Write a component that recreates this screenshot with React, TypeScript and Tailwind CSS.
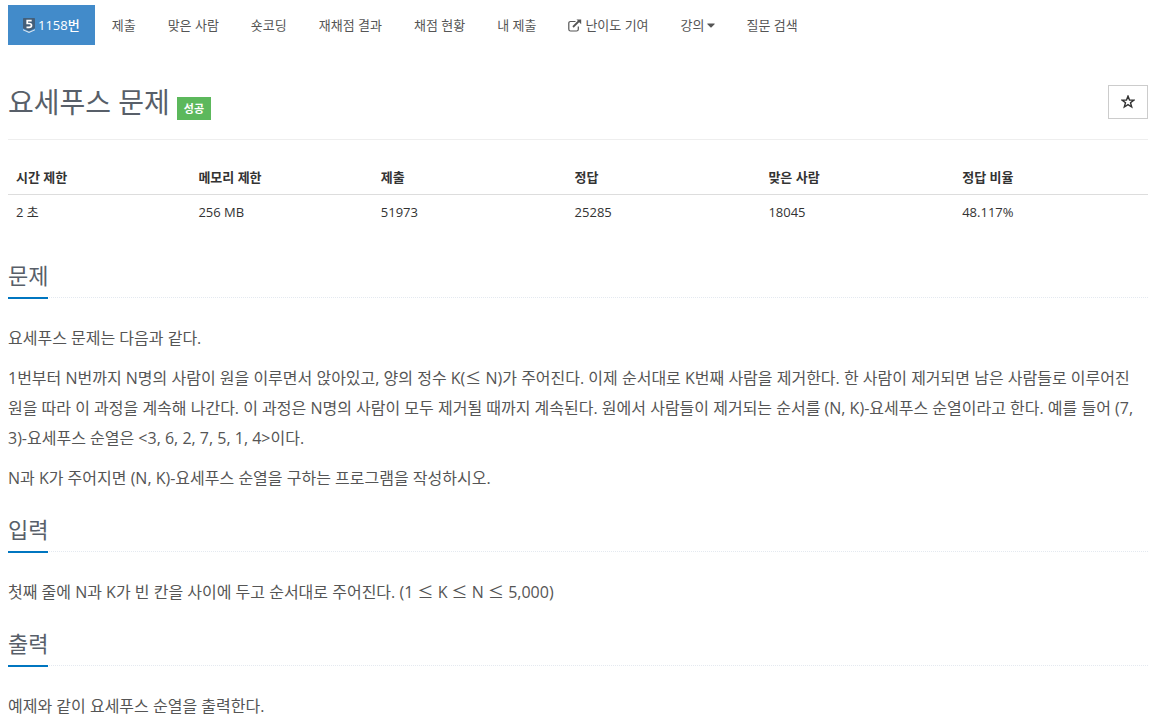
import type { ReactNode } from "react";
import { FaCaretDown } from "react-icons/fa";

interface NavItem {
  label: string;
  icon?: "external";
  dropdown?: boolean;
}

const navItems: NavItem[] = [
  { label: "제출" },
  { label: "맞은 사람" },
  { label: "숏코딩" },
  { label: "재채점 결과" },
  { label: "채점 현황" },
  { label: "내 제출" },
  { label: "난이도 기여", icon: "external" },
  { label: "강의", dropdown: true },
  { label: "질문 검색" },
];

const stats = [
  { label: "시간 제한", value: "2 초", width: "w-[16%]" },
  { label: "메모리 제한", value: "256 MB", width: "w-[16%]" },
  { label: "제출", value: "51973", width: "w-[17%]" },
  { label: "정답", value: "25285", width: "w-[17%]" },
  { label: "맞은 사람", value: "18045", width: "w-[17%]" },
  { label: "정답 비율", value: "48.117%", width: "w-[17%]" },
];

const TierBadge = () => (
  <svg viewBox="0 0 12 15" className="h-[15px] w-3 shrink-0" aria-hidden="true">
    <path d="M0 .8Q0 0 .8 0h10.4Q12 0 12 .8V10.2L6 13 0 10.2Z" fill="#435f7a" />
    <path d="M0 11.2l6 2.6 6-2.6v1.1L6 15 0 12.3Z" fill="#dbe6f0" />
    <path d="M8.7 2.7H4.2V5.5h1.9q2.4 0 2.4 1.9T6 9.3H3.5" fill="none" stroke="#fff" strokeWidth="1.7" />
  </svg>
);

const ExternalIcon = () => (
  <svg viewBox="0 0 14 13" className="h-[13px] w-3.5 shrink-0" fill="none" stroke="currentColor" aria-hidden="true">
    <path d="M7.5 2.5H2.6Q.8 2.5.8 4.3v5.9Q.8 12 2.6 12h5.9q1.8 0 1.8-1.8V7.6" strokeWidth="1.2" />
    <path d="M5 8l6-6" strokeWidth="1.8" />
    <path d="M8.5.5h4.7v4.7Z" fill="currentColor" stroke="none" />
  </svg>
);

const StarIcon = () => (
  <svg viewBox="0 0 14 14" className="h-3.5 w-3.5" fill="none" stroke="currentColor" strokeWidth="1.4" aria-hidden="true">
    <path d="M7 1.1l1.5 3.9 4.4.1-3.4 2.6 1.2 4.3L7 9.6 3.3 12l1.2-4.3-3.4-2.6L5.5 5Z" />
  </svg>
);

// The full-width sign, taken from the Korean font
const Le = () => <span className="font-['Noto_Sans_CJK_KR',sans-serif] leading-none">≤</span>;

const Section = ({ title, children }: { title: string; children: ReactNode }) => (
  <section className="mt-[22px]">
    <div className="mb-[25px] flex border-b border-dotted border-[#e4e9f0]">
      <h2 className="-mb-0.5 border-b-2 border-[#0076c0] pb-2 text-[22px] leading-7 text-[#585f69]">
        {title}
      </h2>
    </div>
    <div className="space-y-2.5 text-base leading-[30px] break-keep text-[#555]">{children}</div>
  </section>
);

const App = () => {
  return (
    <div className="bg-white px-2 pt-[5px] pr-2.5 font-['Open_Sans','Noto_Sans_CJK_KR',sans-serif] text-[13px] leading-5 text-[#333]">
      <nav className="flex flex-wrap gap-0.5 text-[#555]">
        <a href="#problem" className="flex items-center gap-[3px] bg-[#428bca] px-[15px] py-2.5 text-white">
          <TierBadge />
          <span>
            1158<span className="font-medium">번</span>
          </span>
        </a>
        {navItems.map((item) => (
          <a key={item.label} href="#" className="flex items-center px-[15px] py-2.5">
            {item.icon === "external" && <ExternalIcon />}
            <span className={item.icon && "ml-[3px]"}>{item.label}</span>
            {item.dropdown && <FaCaretDown className="ml-0.5 h-3.5 w-2" />}
          </a>
        ))}
      </nav>

      <header id="problem" className="mt-10 flex items-start justify-between border-b border-[#eee] pb-[19px]">
        <div className="flex items-end gap-[7px]">
          <h1 className="text-[28px] leading-[35px] text-[#585f69]">요세푸스 문제</h1>
          <span className="bg-[#5cb85c] px-[7px] text-[11px] leading-[23px] font-bold text-white">성공</span>
        </div>
        <button
          type="button"
          aria-label="즐겨찾기"
          className="flex h-[34px] w-10 items-center justify-center border border-[#ccc] bg-white"
        >
          <StarIcon />
        </button>
      </header>

      <table className="mt-5 w-full table-fixed text-left">
        <thead>
          <tr className="border-b border-[#ddd]">
            {stats.map((s) => (
              <th key={s.label} className={`${s.width} px-2 py-[7px] font-bold`}>
                {s.label}
              </th>
            ))}
          </tr>
        </thead>
        <tbody>
          <tr>
            {stats.map((s) => (
              <td key={s.label} className="px-2 py-[7px]">
                {s.value}
              </td>
            ))}
          </tr>
        </tbody>
      </table>

      <main className="pt-2.5">
        <Section title="문제">
          <p>요세푸스 문제는 다음과 같다.</p>
          <p>
            1번부터 N번까지 N명의 사람이 원을 이루면서 앉아있고, 양의 정수 K(<Le /> N)가 주어진다. 이제 순서대로
            K번째 사람을 제거한다. 한 사람이 제거되면 남은 사람들로 이루어진 원을 따라 이 과정을 계속해 나간다.
            이 과정은 N명의 사람이 모두 제거될 때까지 계속된다. 원에서 사람들이 제거되는 순서를 (N,
            K)-요세푸스 순열이라고 한다. 예를 들어 (7, 3)-요세푸스 순열은 &lt;3, 6, 2, 7, 5, 1, 4&gt;이다.
          </p>
          <p>N과 K가 주어지면 (N, K)-요세푸스 순열을 구하는 프로그램을 작성하시오.</p>
        </Section>
        <Section title="입력">
          <p>
            첫째 줄에 N과 K가 빈 칸을 사이에 두고 순서대로 주어진다. (1 <Le /> K <Le /> N <Le /> 5,000)
          </p>
        </Section>
        <Section title="출력">
          <p>예제와 같이 요세푸스 순열을 출력한다.</p>
        </Section>
      </main>
    </div>
  );
};

export default App;
